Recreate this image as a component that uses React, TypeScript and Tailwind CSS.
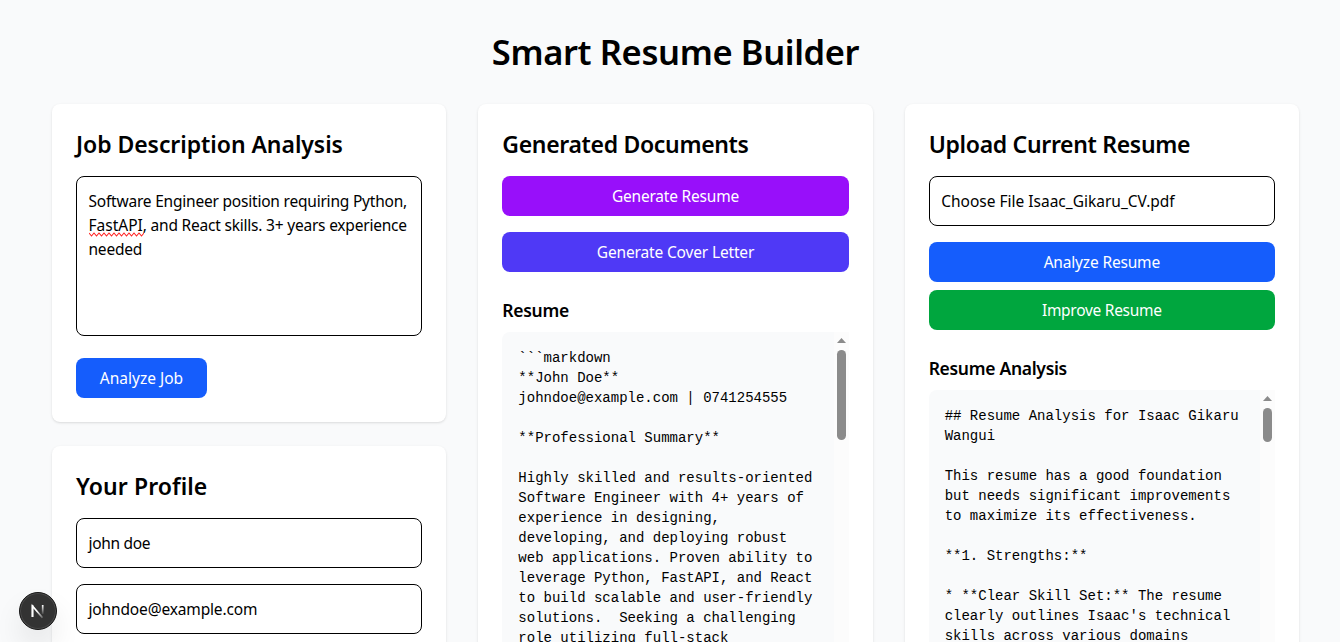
import type { ReactNode } from "react";

const resumeText = `\`\`\`markdown
**John Doe**
johndoe@example.com | 0741254555

**Professional Summary**

Highly skilled and results-oriented
Software Engineer with 4+ years of
experience in designing,
developing, and deploying robust
web applications. Proven ability to
leverage Python, FastAPI, and React
to build scalable and user-friendly
solutions.  Seeking a challenging
role utilizing full-stack`;

const analysisText = `## Resume Analysis for Isaac Gikaru
Wangui

This resume has a good foundation
but needs significant improvements
to maximize its effectiveness.

**1. Strengths:**

* **Clear Skill Set:** The resume
clearly outlines Isaac's technical
skills across various domains`;

function Card({ children }: { children: ReactNode }) {
  return (
    <section className="rounded-lg bg-white p-6 shadow-[0_1px_3px_0_rgba(0,0,0,0.1),0_1px_2px_-1px_rgba(0,0,0,0.1)]">
      {children}
    </section>
  );
}

function Heading({ children, className }: { children: ReactNode; className: string }) {
  return (
    <h2 className={`mb-4 h-8 text-[23px] leading-8 font-semibold whitespace-nowrap ${className}`}>{children}</h2>
  );
}

function Subheading({ children }: { children: ReactNode }) {
  return <h3 className="mt-6 mb-2 h-7 text-[17.5px] leading-7 font-semibold tracking-[-0.3px]">{children}</h3>;
}

function Button({ children, className }: { children: ReactNode; className: string }) {
  return (
    <button className={`block h-10 rounded-lg text-center text-[15.5px] leading-6 text-white ${className}`}>{children}</button>
  );
}

function Field({ children, className }: { children: ReactNode; className: string }) {
  return (
    <div className={`h-[50px] rounded-lg border border-black px-[11.5px] py-3 text-[15.5px] leading-6 whitespace-nowrap ${className}`}>
      {children}
    </div>
  );
}

function Output({ text, thumb }: { text: string; thumb: string }) {
  return (
    <div className="flex h-96 rounded-l-lg bg-gray-50">
      <pre className="flex-1 p-4 font-['Liberation_Mono',monospace] text-sm">{text}</pre>
      <div className="flex w-[15px] shrink-0 flex-col items-center bg-[#fcfcfc] pt-1.5">
        <svg className="h-[5px] w-[9px] shrink-0" viewBox="0 0 9 5">
          <path d="M4.5 0 9 5H0z" fill="#8b8b8b" />
        </svg>
        <div className={`mt-[7px] w-[9px] shrink-0 rounded-full bg-[#8b8b8b] ${thumb}`} />
      </div>
    </div>
  );
}

export default function App() {
  return (
    <main className="relative h-[642px] w-[1340px] overflow-hidden bg-gray-50 pt-8 pl-[52px] font-['Noto_Sans',sans-serif] text-black">
      <div className="w-[1247px]">
        <h1 className="mb-8 h-10 text-center text-[34.5px] leading-10 font-semibold tracking-[-0.38px] whitespace-nowrap">
          Smart Resume Builder
        </h1>
        <div className="grid grid-cols-3 items-start gap-8">
          <div className="flex flex-col gap-6">
            <Card>
              <Heading className="tracking-[-0.06px]">Job Description Analysis</Heading>
              <div className="h-40 rounded-lg border border-black px-[11.5px] py-3 text-[15.5px] leading-6 tracking-[-0.21px] whitespace-nowrap">
                <p>Software Engineer position requiring Python,</p>
                <p>
                  <span className="relative tracking-normal">
                    FastAPI
                    <svg className="absolute -bottom-px left-0 h-[5px] w-[55px]" viewBox="0 0 55 5" fill="none">
                      <path
                        d="M0 1 2.5 4 5 1 7.5 4 10 1 12.5 4 15 1 17.5 4 20 1 22.5 4 25 1 27.5 4 30 1 32.5 4 35 1 37.5 4 40 1 42.5 4 45 1 47.5 4 50 1 52.5 4 55 1"
                        stroke="#ff2020"
                        strokeWidth="1.1"
                      />
                    </svg>
                  </span>
                  <span>, and React skills. 3+ years experience</span>
                </p>
                <p>needed</p>
              </div>
              <Button className="mt-[22px] w-[131px] bg-[#155dfc]">Analyze Job</Button>
            </Card>
            <Card>
              <Heading className="tracking-[0.08px]">Your Profile</Heading>
              <div className="flex flex-col gap-4">
                <Field className="tracking-[-0.3px]">john doe</Field>
                <Field className="tracking-[-0.15px]">johndoe@example.com</Field>
              </div>
            </Card>
          </div>
          <Card>
            <Heading className="tracking-[-0.33px]">Generated Documents</Heading>
            <div className="flex flex-col gap-4">
              <Button className="w-full bg-[#980ffa] tracking-[-0.2px]">Generate Resume</Button>
              <Button className="w-full bg-[#4f39f6] tracking-[-0.15px]">Generate Cover Letter</Button>
            </div>
            <Subheading>Resume</Subheading>
            <Output text={resumeText} thumb="h-[90px]" />
          </Card>
          <Card>
            <Heading className="tracking-[-0.32px]">Upload Current Resume</Heading>
            <Field className="mb-4">Choose File Isaac_Gikaru_CV.pdf</Field>
            <div className="flex flex-col gap-2">
              <Button className="w-full bg-[#155dfc] tracking-[-0.17px]">Analyze Resume</Button>
              <Button className="w-full bg-[#00a63e] tracking-[-0.28px]">Improve Resume</Button>
            </div>
            <Subheading>Resume Analysis</Subheading>
            <Output text={analysisText} thumb="h-[34px]" />
          </Card>
        </div>
      </div>
      <div className="absolute top-[592px] left-[19px] flex size-[38px] items-center justify-center rounded-full border border-[#171717] bg-[#333] shadow-[inset_0_0_0_1px_#4b4b4b,0_16px_32px_-8px_rgba(0,0,0,0.24)]">
        <svg className="size-[38px] shrink-0" viewBox="0 0 38 38" fill="none">
          <defs>
            <linearGradient id="diag" x1="18" y1="19" x2="24" y2="26" gradientUnits="userSpaceOnUse">
              <stop stopColor="#fff" />
              <stop offset="1" stopColor="#fff" stopOpacity="0.2" />
            </linearGradient>
            <linearGradient id="stem" x1="0" y1="13" x2="0" y2="23" gradientUnits="userSpaceOnUse">
              <stop stopColor="#fff" />
              <stop offset="1" stopColor="#fff" stopOpacity="0" />
            </linearGradient>
          </defs>
          <path d="M13.5 25V14L23.5 25.8" stroke="url(#diag)" strokeWidth="1.7" />
          <path d="M13.5 25V13" stroke="#fff" strokeWidth="1.7" />
          <path d="M23.7 13v9" stroke="url(#stem)" strokeWidth="1.7" />
        </svg>
      </div>
    </main>
  );
}
